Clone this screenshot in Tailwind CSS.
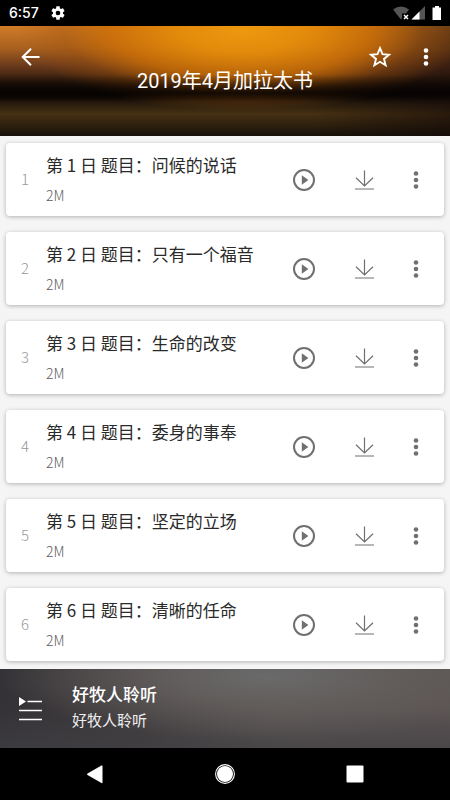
<!DOCTYPE html>
<html lang="zh-CN">
<head>
<meta charset="utf-8">
<meta name="viewport" content="width=device-width, initial-scale=1">
<title>2019年4月加拉太书</title>
<script src="https://cdn.jsdelivr.net/npm/@tailwindcss/browser@4"></script>
</head>
<body class="flex h-screen flex-col overflow-hidden bg-[#f5f5f5] font-['Noto_Sans_CJK_SC',sans-serif]">

<svg class="hidden" aria-hidden="true">
  <symbol id="dots" viewBox="0 0 24 24"><circle cx="12" cy="5.5" r="2.3"/><circle cx="12" cy="12" r="2.3"/><circle cx="12" cy="18.5" r="2.3"/></symbol>
  <symbol id="play" viewBox="0 0 24 24"><circle cx="12" cy="12" r="10" fill="none" stroke="currentColor" stroke-width="2"/><path d="M9.8 7.200v9.600L16.400 12z"/></symbol>
  <symbol id="download" viewBox="0 0 24 24"><path d="M12.500 2.500v15.500M4 9.700l8.500 8.300 8.500-8.300M3 21h19" fill="none" stroke="currentColor" stroke-width="1.200"/></symbol>
</svg>

<!-- Status bar -->
<div class="flex h-[26px] shrink-0 items-center bg-black pl-[9px] pr-2 text-white">
  <span class="font-['Inter',sans-serif] text-[14px] font-medium leading-5">6:57</span>
  <svg class="ml-[11px] size-4" viewBox="0 0 24 24" fill="currentColor" aria-hidden="true"><path d="M19.430 12.980c.04-.32.07-.64.07-.98s-.03-.66-.07-.98l2.110-1.650c.19-.15.24-.42.12-.64l-2-3.460c-.12-.22-.39-.3-.61-.22l-2.490 1c-.52-.4-1.080-.73-1.690-.98l-.38-2.650C14.460 2.180 14.250 2 14 2h-4c-.25 0-.46.18-.49.42l-.38 2.650c-.61.25-1.170.59-1.690.98l-2.490-1c-.23-.09-.49 0-.61.22l-2 3.460c-.13.22-.07.49.12.64l2.110 1.650c-.04.32-.07.65-.07.98s.03.66.07.98l-2.110 1.650c-.19.15-.24.42-.12.64l2 3.460c.12.22.39.3.61.22l2.490-1c.52.4 1.080.73 1.690.98l.38 2.650c.03.24.24.42.49.42h4c.25 0 .46-.18.49-.42l.38-2.650c.61-.25 1.170-.59 1.690-.98l2.490 1c.23.09.49 0 .61-.22l2-3.460c.12-.22.07-.49-.12-.64zM12 15.500a3.500 3.500 0 1 1 0-7 3.500 3.500 0 0 1 0 7z"/></svg>
  <svg class="ml-auto h-4 w-[50px]" viewBox="0 0 50 16" aria-hidden="true">
    <path d="M1 4.500Q9-1.500 17 4.500L14 8.500H10v5L8.500 14z" fill="#555"/>
    <path d="M12 10l4 4M16 10l-4 4" stroke="#fff" stroke-width="1.500"/>
    <path d="M33 1v13.500H19.500z" fill="#555"/><path d="M27.500 6.500v8h-8z" fill="#fff"/>
    <path d="M43 1h4v1.500h2V15h-8.500V2.500H43z" fill="#fff"/>
  </svg>
</div>

<!-- Sunset header -->
<header class="relative h-[110px] shrink-0 bg-[linear-gradient(180deg,transparent_44%,#060302cc_61%,transparent_69%),radial-gradient(ellipse_50%_74%_at_54%_4%,#ee980f_0%,#e58c0af0_28%,#cf7005c8_58%,#a0520a60_80%,transparent_100%),linear-gradient(90deg,transparent_70%,#1208088c_100%),linear-gradient(180deg,#d07c28_0%,#a9611f_20%,#6b3a1c_36%,#38200f_48%,#140a06_57%,#080403_63%,#2a1d0e_71%,#453012_80%,#2c1f0d_91%,#171009_100%)] text-white">
  <div class="flex items-center pl-[19px] pr-3 pt-[19px]">
    <button type="button" aria-label="返回" class="size-6"><svg class="size-6" viewBox="0 0 24 24" fill="none" stroke="currentColor" stroke-width="2" aria-hidden="true"><path d="M20.500 12H4.500M12 3.700L3.700 12l8.300 8.300"/></svg></button>
    <button type="button" aria-label="收藏" class="ml-auto size-6"><svg class="size-6" viewBox="0 0 24 24" fill="none" stroke="currentColor" stroke-width="1.900" aria-hidden="true"><path d="M12 3.200l2.500 6 6.500.5-5 4.200 1.600 6.300-5.600-3.400-5.600 3.400L8 13.900 3 9.700l6.500-.5z"/></svg></button>
    <button type="button" aria-label="更多选项" class="ml-[22px] size-6"><svg class="size-6" fill="currentColor" aria-hidden="true"><use href="#dots"/></svg></button>
  </div>
  <h1 class="absolute inset-x-0 top-[41px] text-center font-['Roboto','Noto_Sans_CJK_SC',sans-serif] text-[20px] leading-7">2019年4月加拉太书</h1>
</header>

<main class="min-h-0 flex-1 overflow-hidden px-1.5 pt-[7px]">
  <ol id="tracks" class="flex flex-col gap-4"></ol>
</main>

<template id="track">
  <li class="flex h-[73px] items-center rounded bg-white pr-4 text-[#707070] shadow-[0_1px_4px_rgba(0,0,0,0.28)]">
    <span data-number class="w-[38px] shrink-0 text-center text-[15px] font-light text-[#999]"></span>
    <div class="ml-0.5 min-w-0 flex-1">
      <h2 class="whitespace-nowrap text-[17px] leading-6 text-[#2a2a2a]"></h2>
      <p class="mt-1.5 text-[14px] font-light leading-6 text-[#606060]">2M</p>
    </div>
    <button type="button" aria-label="播放" class="size-6"><svg class="size-6" fill="currentColor" aria-hidden="true"><use href="#play"/></svg></button>
    <button type="button" aria-label="下载" class="ml-9 size-6"><svg class="size-6" aria-hidden="true"><use href="#download"/></svg></button>
    <button type="button" aria-label="更多" class="ml-7 size-6"><svg class="size-6" fill="currentColor" aria-hidden="true"><use href="#dots"/></svg></button>
  </li>
</template>

<!-- Mini player -->
<footer class="flex h-[79px] shrink-0 items-center bg-[radial-gradient(ellipse_60%_80%_at_60%_10%,#6a6a6a_0%,#64605ecc_45%,transparent_100%),linear-gradient(180deg,transparent_50%,#40404499_100%),linear-gradient(90deg,#343236_0%,#403b3d_30%,#575150_60%,#5a5252_100%)] pl-[18px] text-white">
  <button type="button" aria-label="播放列表" class="size-6"><svg class="size-6" viewBox="0 0 24 24" fill="currentColor" aria-hidden="true"><path d="M1 0v9l7-4.500z"/><path d="M9.500 4.500H24M1 13.500h23M1 22.500h23" stroke="currentColor" stroke-width="1.700"/></svg></button>
  <div class="ml-[30px] pb-[3px]">
    <p class="text-[17px] font-medium leading-[26px]">好牧人聆听</p>
    <p class="text-[15px] leading-[26px] text-[#eee]">好牧人聆听</p>
  </div>
</footer>

<!-- System navigation -->
<nav class="flex h-[52px] shrink-0 items-center justify-center gap-[106px] bg-black text-white">
  <button type="button" aria-label="后退" class="size-6"><svg class="size-6" viewBox="0 0 24 24" fill="currentColor" aria-hidden="true"><path d="M19.500 4v16.500q0 1-1 .5L4.500 13q-1-.7 0-1.400L18.500 3.500q1-.4 1 .5z"/></svg></button>
  <button type="button" aria-label="主屏幕" class="size-6"><svg class="size-6" viewBox="0 0 24 24" fill="currentColor" aria-hidden="true"><circle cx="12" cy="12" r="8"/><circle cx="12" cy="12" r="9.400" fill="none" stroke="currentColor" stroke-width="1.100"/></svg></button>
  <button type="button" aria-label="最近任务" class="size-6"><svg class="size-6" viewBox="0 0 24 24" fill="currentColor" aria-hidden="true"><rect x="3.500" y="3.500" width="17" height="17" rx="1"/></svg></button>
</nav>

<script>
  const titles = ["问候的说话", "只有一个福音", "生命的改变", "委身的事奉", "坚定的立场", "清晰的任命"];
  const list = document.getElementById("tracks");
  const template = document.getElementById("track");
  titles.forEach((title, index) => {
    const row = template.content.cloneNode(true);
    row.querySelector("[data-number]").textContent = index + 1;
    row.querySelector("h2").textContent = `第 ${index + 1} 日 题目：${title}`;
    list.append(row);
  });
</script>
</body>
</html>
